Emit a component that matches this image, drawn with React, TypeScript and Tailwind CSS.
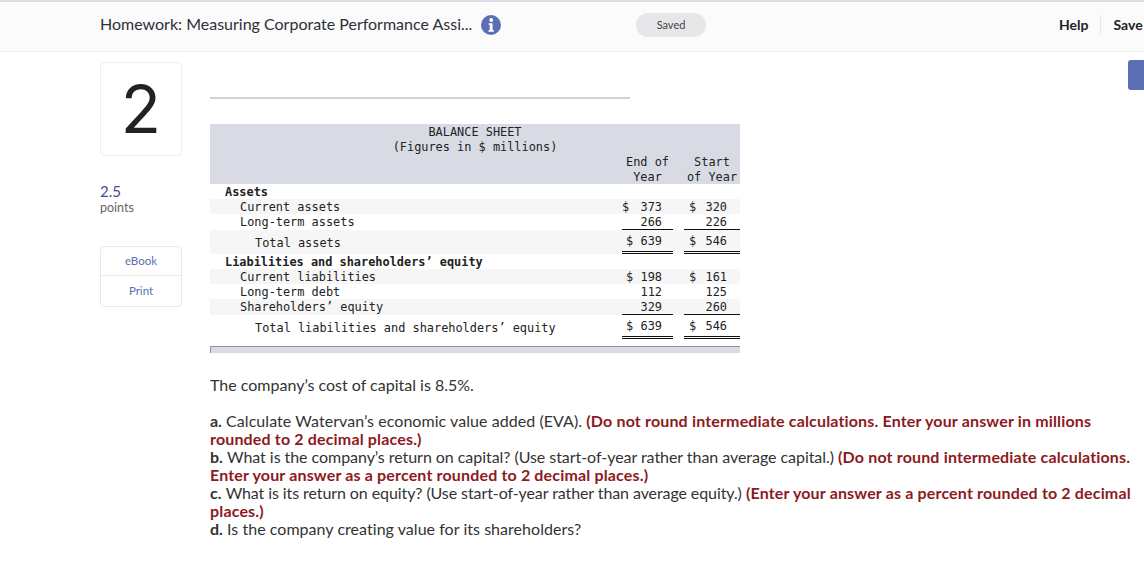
const mono = "font-['DejaVu_Sans_Mono','Liberation_Mono',monospace]";

type Row = {
    label: string;
    indent: number;
    bold?: boolean;
    shaded?: boolean;
    h: string;
    end?: string;
    start?: string;
    endDollar?: boolean;
    startDollar?: boolean;
    line?: "single" | "double";
};

const rows: Row[] = [
    {label: "Assets", indent: 0, bold: true, h: "h-[15px]"},
    {label: "Current assets", indent: 1, shaded: true, h: "h-[15px]", end: "373", start: "320", endDollar: true, startDollar: true},
    {label: "Long-term assets", indent: 1, h: "h-[16px]", end: "266", start: "226", line: "single"},
    {label: "Total assets", indent: 2, shaded: true, h: "h-[24px]", end: "639", start: "546", endDollar: true, startDollar: true, line: "double"},
    {label: "Liabilities and shareholders’ equity", indent: 0, bold: true, h: "h-[15px]"},
    {label: "Current liabilities", indent: 1, shaded: true, h: "h-[15px]", end: "198", start: "161", endDollar: true, startDollar: true},
    {label: "Long-term debt", indent: 1, h: "h-[15px]", end: "112", start: "125"},
    {label: "Shareholders’ equity", indent: 1, shaded: true, h: "h-[16px]", end: "329", start: "260", line: "single"},
    {label: "Total liabilities and shareholders’ equity", indent: 2, h: "h-[24px]", end: "639", start: "546", endDollar: true, startDollar: true, line: "double"},
];

const indents = ["pl-[15px]", "pl-[30px]", "pl-[45px]"];

const labelPad = (r: Row) => {
    if (r.line === "double") return "pt-[2px]";
    if (r.line === "single") return "";
    return "pt-[2px]";
};

const Amount = ({value, dollar, line, right, left}: {value?: string; dollar?: boolean; line?: Row["line"]; right: string; left: string}) => (
    <div className={`relative flex items-center justify-between h-full leading-[13px] ${line === "double" ? "" : "pt-[2px]"} ${left} ${right} ${line ? "border-b border-[#111]" : ""}`}>
        <span>{dollar ? "$" : ""}</span>
        <span>{value}</span>
        {line === "double" && <div className="absolute left-0 right-0 bottom-[1px] h-px bg-[#111]"/>}
    </div>
);

export default function App() {
    return (
        <div className="w-[1144px] h-[564px] overflow-hidden bg-white font-['Lato','Open_Sans',sans-serif] text-[#333]">
            <header className="h-[52px] border-t-2 border-t-[#dcdde3] border-b border-b-[#eeeeee] bg-[#fbfbfc] flex items-center pl-[100px] pb-[3px]">
                <span className="text-[16px] w-[375px] -mt-[2px] whitespace-nowrap text-[#2f2f38]">Homework: Measuring Corporate Performance Assi...</span>
                <svg viewBox="0 0 20 20" className="w-5 h-5 ml-[6px]">
                    <circle cx="10" cy="10" r="10" fill="#5a6fb4"/>
                    <circle cx="10.2" cy="5" r="1.9" fill="#fff"/>
                    <path d="M7.6 8.2h4v7h1.3v1.6H7.4v-1.6h1.3V9.8H7.6z" fill="#fff"/>
                </svg>
                <div className="w-[70px] h-6 ml-[135px] rounded-full bg-[#e7e6e9] flex items-center justify-center text-[11px] text-[#444]">Saved</div>
                <span className="ml-[353px] -mt-[1px] text-[14px] font-bold text-[#222]">Help</span>
                <div className="ml-[12px] w-px h-5 bg-[#e8e8e8]"/>
                <span className="ml-[12px] -mt-[1px] text-[14px] font-bold text-[#222]">Save</span>
            </header>

            <div className="flex pl-[100px] pt-[10px] relative">
                <aside className="w-[82px] shrink-0">
                    <div className="h-[94px] border border-[#eeeeee] rounded-[4px] flex items-center justify-center text-[66px] leading-none text-[#222] font-['Inter',sans-serif] font-normal">2</div>
                    <div className="mt-[27px] text-[15px] leading-[16px] text-[#3f4f8f]">2.5</div>
                    <div className="mt-[1px] text-[12.5px] leading-[16px] text-[#666]">points</div>
                    <div className="mt-[30px] border border-[#e8e8e8] rounded-[4px] text-[11.5px] text-[#5a6fb4]">
                        <div className="h-[29px] flex items-center justify-center border-b border-[#e8e8e8]">eBook</div>
                        <div className="h-[30px] flex items-center justify-center">Print</div>
                    </div>
                </aside>

                <main className="ml-[28px] w-[925px] shrink-0">
                    <div className="mt-[35px] w-[420px] h-[2px] bg-[#cfd1dc]"/>
                    <div className={`mt-[25px] w-[530px] text-[11.9px] text-[#222] ${mono}`}>
                        <div className="bg-[#d9dbe4] h-[60px] relative">
                            <div className="pt-[1px] text-center leading-[15px]">
                                <div>BALANCE SHEET</div>
                                <div>(Figures in $ millions)</div>
                            </div>
                            <div className="absolute right-0 -bottom-[1px] flex gap-[11px] leading-[15px] text-center">
                                <div className="w-[51px]"><div>End of</div><div>Year</div></div>
                                <div className="w-[56px]"><div>Start</div><div>of Year</div></div>
                            </div>
                        </div>
                        {rows.map((r) => (
                            <div key={r.label} className={`grid grid-cols-[412px_51px_11px_56px] items-center ${r.h} ${r.shaded ? "bg-[#f6f6f6]" : ""}`}>
                                <div className={`${indents[r.indent]} ${labelPad(r)} leading-[13px] whitespace-nowrap ${r.bold ? "font-bold" : ""}`}>{r.label}</div>
                                {r.end ? <Amount value={r.end} dollar={r.endDollar} line={r.line} left={r.end === "373" ? "pl-0" : "pl-[4px]"} right="pr-[11px]"/> : <div/>}
                                <div/>
                                {r.start ? <Amount value={r.start} dollar={r.startDollar} line={r.line} left="pl-[5px]" right="pr-[13px]"/> : <div/>}
                            </div>
                        ))}
                        <div className="mt-[7px] h-[7px] bg-[#d9dbe4] border-t border-t-[#8f939e] border-l border-l-[#8f939e]"/>
                    </div>

                    <div className="mt-[23px] text-[16px] leading-[18px] text-[#333] w-[925px]">
                        <p>The company’s cost of capital is 8.5%.</p>
                        <p className="mt-[18px]">
                            <b>a.</b> <span className="tracking-[0.06px]">Calculate Watervan’s economic value added (EVA).</span> <b className="text-[#8c1a22] tracking-[0.16px]">(Do not round intermediate calculations. Enter your answer in millions rounded to 2 decimal places.)</b>
                            <br/>
                            <b>b.</b> <span className="tracking-[-0.05px]">What is the company’s return on capital? (Use start-of-year rather than average capital.)</span> <b className="text-[#8c1a22] tracking-[0.16px]">(Do not round intermediate calculations. Enter your answer as a percent rounded to 2 decimal places.)</b>
                            <br/>
                            <b>c.</b> <span className="tracking-[-0.09px]">What is its return on equity? (Use start-of-year rather than average equity.)</span> <b className="text-[#8c1a22] tracking-[0.16px]">(Enter your answer as a percent rounded to 2 decimal places.)</b>
                            <br/>
                            <b>d.</b> <span className="tracking-[0.04px]">Is the company creating value for its shareholders?</span>
                        </p>
                    </div>
                </main>

                <div className="absolute top-[8px] left-[1128px] w-[20px] h-[30px] rounded-[3px] bg-[#5a6fb4]"/>
            </div>
        </div>
    );
}
